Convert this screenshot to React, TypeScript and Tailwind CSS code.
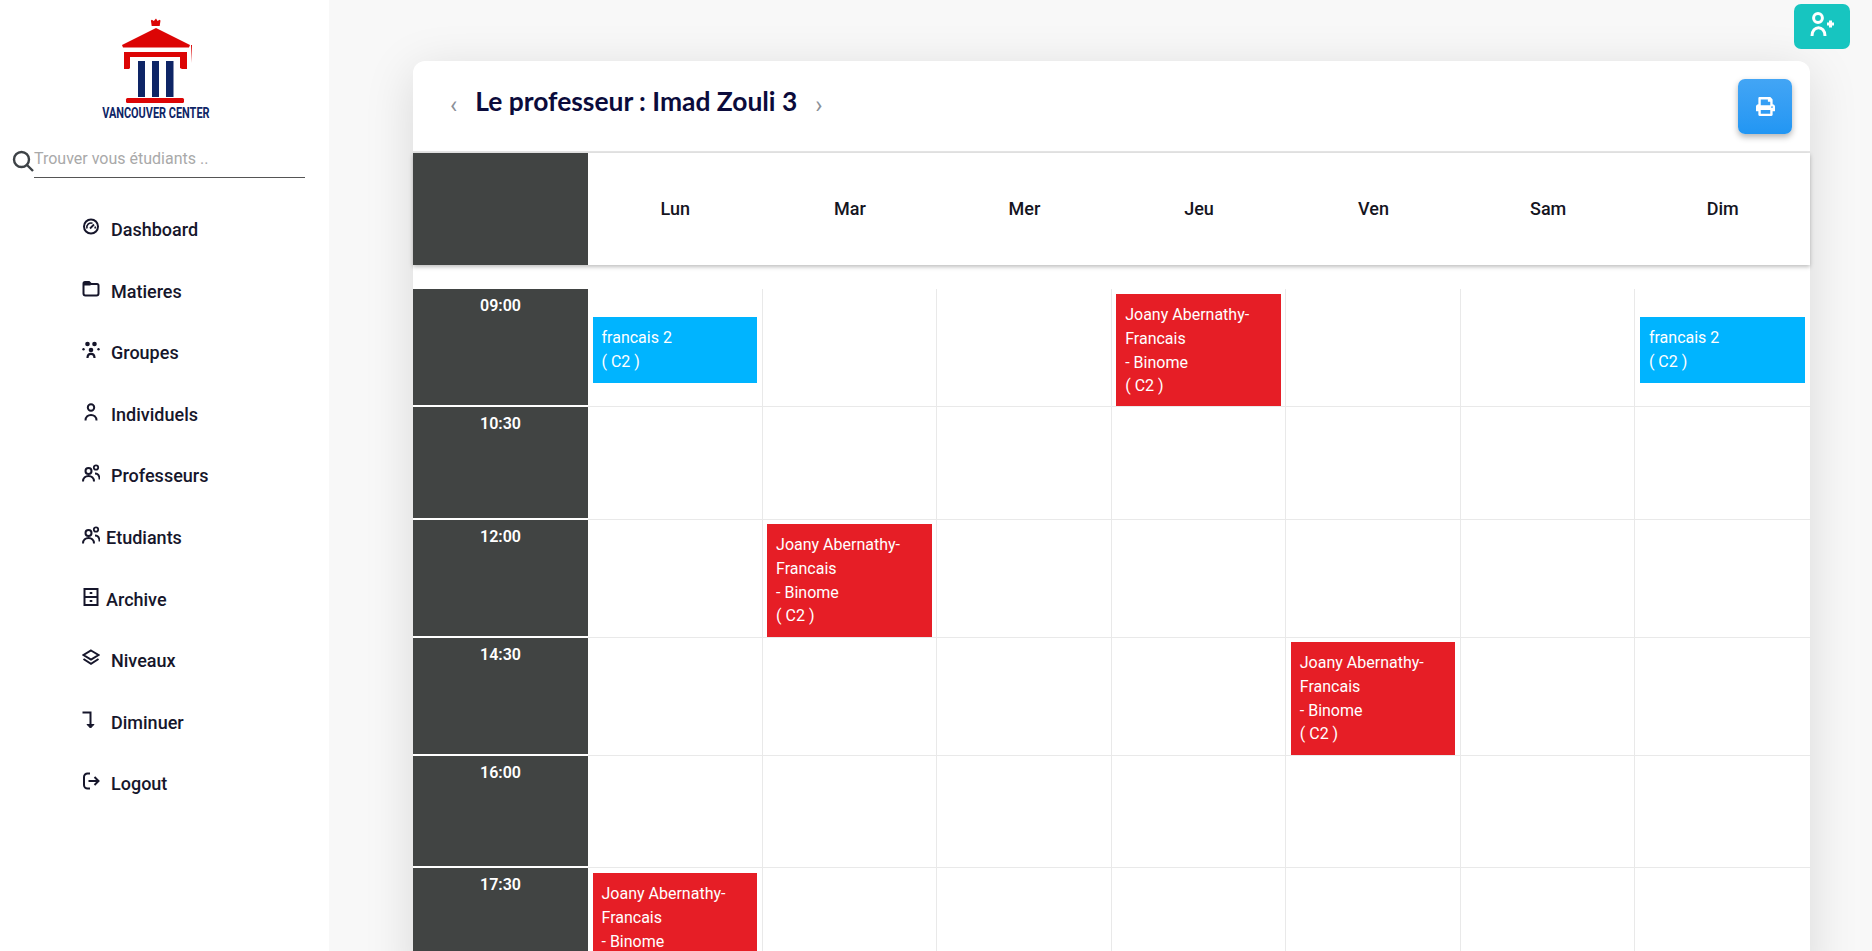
import React from "react";
import { FaPrint } from "react-icons/fa";

const Ic = ({ children, fill = "none" }: { children: React.ReactNode; fill?: string }) => (
  <svg viewBox="0 0 18 18" className="w-[18px] h-[18px]" fill={fill} stroke="currentColor" strokeWidth="2">
    {children}
  </svg>
);

const IconDashboard = () => (
  <Ic>
    <circle cx="9" cy="8.5" r="7" />
    <path d="M5 10.5a4.3 4.3 0 0 1 5.5-5.3" strokeWidth="1.6" />
    <path d="M8 10.5l4-4" strokeWidth="1.8" />
    <path d="M13 8.5a4 4 0 0 1 .2 2" strokeWidth="1.6" />
  </Ic>
);
const IconFolder = () => (
  <Ic>
    <path d="M1.5 3.5a1.5 1.5 0 0 1 1.5-1.5h4l2 2h6a1.5 1.5 0 0 1 1.5 1.5v8a2 2 0 0 1-2 2H3.5a2 2 0 0 1-2-2z" />
    <path d="M2 3h5l1.5 2H2z" fill="currentColor" strokeWidth="1" />
  </Ic>
);
const IconGroupes = () => (
  <svg viewBox="0 0 18 18" className="w-[18px] h-[18px]" fill="currentColor">
    <circle cx="5.5" cy="3" r="2.3" />
    <circle cx="12.5" cy="3" r="2.3" />
    <circle cx="9" cy="9" r="2.3" />
    <circle cx="1.5" cy="8.3" r="1.2" />
    <circle cx="16.5" cy="8.3" r="1.2" />
    <path d="M5.5 17c0-5.5 7-5.5 7 0" fill="none" stroke="currentColor" strokeWidth="2.2" />
  </svg>
);
const IconUser = () => (
  <Ic>
    <circle cx="9" cy="4.5" r="3.2" />
    <path d="M3.5 17.5c0-7.5 11-7.5 11 0" />
  </Ic>
);
const IconPeople = () => (
  <Ic>
    <circle cx="6.5" cy="7" r="3" />
    <path d="M1 17.5c0-7.5 11-7.5 11 0" />
    <circle cx="14" cy="3.5" r="2.2" strokeWidth="1.8" />
    <path d="M13 9.5c3 0 4.5 2.5 4.5 6" strokeWidth="1.8" />
  </Ic>
);
const IconArchive = () => (
  <Ic>
    <rect x="2.5" y="1" width="13" height="16" />
    <path d="M2.5 9h13" />
    <path d="M7.7 5h2.6M7.7 13h2.6" strokeWidth="2.2" />
  </Ic>
);
const IconStack = () => (
  <Ic>
    <path d="M9 1.5L16.5 6 9 10.5 1.5 6z" />
    <path d="M1.5 10L9 14.8 16.5 10" />
  </Ic>
);
const IconCorner = () => (
  <Ic>
    <path d="M0.5 1.5h8v15" />
    <path d="M5 13.5h7L8.5 17z" fill="currentColor" strokeWidth="1" />
  </Ic>
);
const IconLogout = () => (
  <Ic>
    <path d="M8 1.5H5.5A3.5 3.5 0 0 0 2 5v8a3.5 3.5 0 0 0 3.5 3.5H8" />
    <path d="M6.5 9h10M12.5 5l4 4-4 4" />
  </Ic>
);

const nav = [
  { t: "Dashboard", i: <IconDashboard />, gap: "ml-[11px]" },
  { t: "Matieres", i: <IconFolder />, gap: "ml-[11px]" },
  { t: "Groupes", i: <IconGroupes />, gap: "ml-[11px]" },
  { t: "Individuels", i: <IconUser />, gap: "ml-[11px]" },
  { t: "Professeurs", i: <IconPeople />, gap: "ml-[11px]" },
  { t: "Etudiants", i: <IconPeople />, gap: "ml-[6px]" },
  { t: "Archive", i: <IconArchive />, gap: "ml-[6px]" },
  { t: "Niveaux", i: <IconStack />, gap: "ml-[11px]" },
  { t: "Diminuer", i: <IconCorner />, gap: "ml-[11px]" },
  { t: "Logout", i: <IconLogout />, gap: "ml-[11px]" },
];

const Logo = () => (
  <svg viewBox="120 16 72 90" className="w-[72px] h-[90px]">
    <path d="M156 18.5l1.6 2.6 1.9-1.4 1 .8-.8 5.5h-8l-.8-5.5 1-.8 1.9 1.4z" fill="#dc0505" />
    <path d="M122 45l34-17 34 17-1 2.5h-66z" fill="#dc0505" />
    <path d="M191.5 45l1 18" stroke="#dc0505" strokeWidth="1" fill="none" />
    <path d="M124 52h63v17h-5l-2-1v-11h-50v11l-1 1h-5z" fill="#dc0505" />
    <rect x="138" y="61" width="7" height="36" fill="#0e2566" />
    <rect x="152" y="61" width="7" height="36" fill="#0e2566" />
    <rect x="166" y="61" width="7.5" height="36" fill="#0e2566" />
    <rect x="126" y="98" width="58" height="5" rx="1.5" fill="#dc0505" />
  </svg>
);

const days = ["Lun", "Mar", "Mer", "Jeu", "Ven", "Sam", "Dim"];

type Ev = { kind: "c" | "j"; lines: string[] };
const J: Ev = { kind: "j", lines: ["Joany Abernathy-", "Francais", "- Binome", "( C2 )"] };
const F: Ev = { kind: "c", lines: ["francais 2", "( C2 )"] };

const rows: { time: string; rowClass: string; ev: Record<number, Ev>; top: string }[] = [
  { time: "09:00", rowClass: "h-[118px]", ev: { 0: F, 3: J, 6: F }, top: "mt-[5px] pb-[8px]" },
  { time: "10:30", rowClass: "h-[113px]", ev: {}, top: "mt-[4px] pb-[9px]" },
  { time: "12:00", rowClass: "h-[118px]", ev: { 1: J }, top: "mt-[4px] pb-[9px]" },
  { time: "14:30", rowClass: "h-[118px]", ev: { 4: J }, top: "mt-[4px] pb-[9px]" },
  { time: "16:00", rowClass: "h-[112px]", ev: {}, top: "mt-[4px] pb-[9px]" },
  { time: "17:30", rowClass: "h-[118px]", ev: { 0: J }, top: "mt-[5px] pb-[8px]" },
];

const Event = ({ e, top }: { e: Ev; top: string }) =>
  e.kind === "j" ? (
    <div className={`${top} mr-[4.5px] ml-[4.5px] bg-[#e61e26] text-white text-[16px] leading-[23.8px] pl-[9px] pt-[9px] whitespace-nowrap`}>
      {e.lines.map((l) => (
        <div key={l}>{l}</div>
      ))}
    </div>
  ) : (
    <div className="mt-[28px] mr-[4.5px] ml-[4.5px] bg-[#00b4ff] text-white text-[16px] leading-[23.8px] pl-[9px] pt-[9px] pb-[9px] whitespace-nowrap">
      {e.lines.map((l) => (
        <div key={l}>{l}</div>
      ))}
    </div>
  );

export default function App() {
  return (
    <div className="flex h-[951px] overflow-hidden bg-[#f8f8f8] font-['Roboto',sans-serif] text-[#16162b]">
      <aside className="w-[329px] h-full shrink-0 bg-white flex flex-col">
        <div className="flex flex-col items-center pt-[16px] pr-[18px] h-[140px]">
          <Logo />
          <div className="font-['Roboto',sans-serif] font-bold text-[14px] leading-[14px] text-[#0e2566] whitespace-nowrap scale-x-[0.78]">
            VANCOUVER CENTER
          </div>
        </div>
        <div className="flex items-start pl-[12px] mt-[6px]">
          <svg viewBox="0 0 22 22" className="w-[22px] h-[22px] mt-[4px] shrink-0" fill="none" stroke="#3d4246" strokeWidth="2.4">
            <circle cx="9.5" cy="9.5" r="7.5" />
            <path d="M15 15l6 6" />
          </svg>
          <div className="w-[271px] h-[32px] border-b border-[#555] text-[16px] leading-[26px] text-[#a9a9a9]">Trouver vous étudiants ..</div>
        </div>
        <nav className="mt-[36px] pl-[82px] flex flex-col">
          {nav.map((n) => (
            <div key={n.t} className="h-[61.6px] flex items-start">
              <span className="w-[18px] h-[18px] mt-[4px] shrink-0">{n.i}</span>
              <span className={`${n.gap} mt-[6px] text-[18px] leading-[20px] font-medium whitespace-nowrap`}>{n.t}</span>
            </div>
          ))}
        </nav>
      </aside>

      <main className="relative flex-1 pl-[84px] pr-[62px] pt-[61px]">
        <button className="absolute top-[4px] right-[22px] w-[56px] h-[45px] rounded-[7px] bg-[#17c5c0] flex items-center justify-center text-white">
          <svg viewBox="0 0 26 26" className="w-[26px] h-[26px] -mt-[6px]" fill="none" stroke="currentColor" strokeWidth="3">
            <circle cx="9" cy="7" r="4.4" />
            <path d="M3 25c0-11 13-11 13 0" />
            <path d="M18 13h7M21.5 9.5v7" />
          </svg>
        </button>

        <div className="rounded-t-[12px] bg-white shadow-[0_10px_50px_rgba(0,0,0,0.13)]">
          <div className="h-[92px] flex items-start border-b-2 border-[#e6e6e6] pl-[37px] pr-[18px]">
            <span className="mt-[32px] text-[24px] leading-[24px] text-[#8a8f98]">‹</span>
            <h1 className="ml-[18px] mt-[24px] font-['Lato',sans-serif] font-bold text-[26.4px] leading-[32px] text-[#0b0b3b] whitespace-nowrap">Le professeur : Imad Zouli 3</h1>
            <span className="ml-[18px] mt-[32px] text-[24px] leading-[24px] text-[#8a8f98]">›</span>
            <button className="ml-auto mt-[18px] w-[54px] h-[55px] rounded-[7px] bg-gradient-to-b from-[#42a5f5] to-[#2196f3] shadow-[0_3px_6px_rgba(0,0,0,0.3)] flex items-center justify-center text-white">
              <FaPrint className="w-[19px] h-[19px]" />
            </button>
          </div>

          <div className="flex h-[112px] shadow-[0_2px_4px_rgba(0,0,0,0.25)] relative">
            <div className="w-[175px] shrink-0 bg-[#414443]" />
            <div className="flex-1 grid grid-cols-7">
              {days.map((d) => (
                <div key={d} className="flex items-center justify-center text-[18px] leading-[24px] font-medium text-[#15151f]">{d}</div>
              ))}
            </div>
          </div>

          <div className="pt-[24px]">
            {rows.map((r) => (
              <div key={r.time} className={`flex ${r.rowClass}`}>
                <div className="w-[175px] shrink-0 bg-[#414443] border-b-2 border-white text-white text-center text-[16px] font-semibold leading-[20px] pt-[6.5px]">
                  {r.time}
                </div>
                <div className="flex-1 grid grid-cols-7">
                  {days.map((d, i) => (
                    <div key={d} className="border-r border-b border-[#e9e9e9] last:border-r-0 min-w-0">
                      {r.ev[i] && <Event e={r.ev[i]} top={r.top} />}
                    </div>
                  ))}
                </div>
              </div>
            ))}
          </div>
        </div>
      </main>
    </div>
  );
}
